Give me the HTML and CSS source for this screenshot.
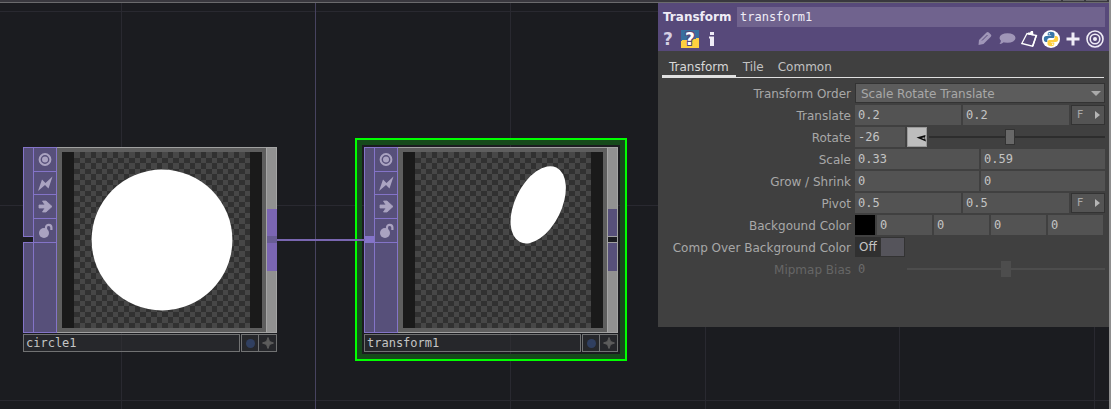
FILE: index.html
```html
<!DOCTYPE html>
<html lang="en">
<head>
<meta charset="utf-8">
<title>Network Editor</title>
<link rel="stylesheet" href="styles.css">
</head>
<body>
<svg class="symbols" aria-hidden="true">
  <defs><pattern id="checker" width="11" height="11" patternUnits="userSpaceOnUse"><rect width="11" height="11" fill="#313131"/><path d="M0 0h6v6H0zM6 6h5v5H6z" fill="#474747" shape-rendering="crispEdges"/></pattern></defs>
  <symbol id="view" viewBox="0 0 22 23"><circle cx="11" cy="11.500" r="5.400" fill="none" stroke="currentColor" stroke-width="2"/><circle cx="11" cy="11.500" r="3" fill="currentColor"/></symbol>
  <symbol id="bolt" viewBox="0 0 22 23"><path d="M4 19 8 7.500l3.500 3.500L18.500 4.500l-4 12L11 13z" fill="currentColor"/></symbol>
  <symbol id="arrow" viewBox="0 0 22 23"><path d="M5 10h6L8.500 6h3.500l6 5.500-6 5.500H8.500l2.500-4H5z" fill="currentColor" stroke="currentColor" stroke-width=".8"/></symbol>
  <symbol id="lock" viewBox="0 0 22 23"><circle cx="10" cy="14" r="5" fill="currentColor"/><path d="M12 10.500V8.500a2.700 2.700 0 0 1 5.400 0v2.500" fill="none" stroke="currentColor" stroke-width="2.200"/></symbol>
  <symbol id="star" viewBox="0 0 16 16"><path d="M8 2.500 9.500 6.500l4 1.500-4 1.500L8 13.500 6.500 9.500l-4-1.500 4-1.500z" fill="#5c5c5c" stroke="#5c5c5c"/></symbol>
</svg>
<main class="editor">
  <div class="topbar"><span></span><span></span><span></span></div>
  <section class="network" aria-label="Network">
    <svg class="gridlines" aria-hidden="true">
      <path d="M121.500 0V2000M510.500 0V2000M705.500 0V2000M899.500 0V2000M1094.500 0V2000M0 8.500H4000M0 202.500H4000M0 397.500H4000" stroke="#292930"/>
      <path d="M315.500 0V2000" stroke="#47435f"/>
    </svg>

    <div class="place place-circle">
      <article class="node">
        <div class="body">
          <div class="input-bar"><i class="port"></i></div>
          <div class="flags">
            <button aria-label="Viewer"><svg><use href="#view"/></svg></button>
            <button aria-label="Bypass"><svg><use href="#bolt"/></svg></button>
            <button aria-label="Display"><svg><use href="#arrow"/></svg></button>
            <button aria-label="Lock"><svg><use href="#lock"/></svg></button>
          </div>
          <div class="view"><div class="screen"><svg viewBox="0 0 176 176"><rect width="176" height="176" fill="url(#checker)"/><circle cx="88" cy="88" r="70.400" fill="#fff"/></svg></div></div>
          <div class="output-bar linked"><i class="port"></i></div>
        </div>
        <div class="caption"><span class="name">circle1</span><button aria-label="Comment"><i class="dot"></i></button><button aria-label="Activate"><svg><use href="#star"/></svg></button></div>
      </article>
    </div>

    <div class="place place-transform">
      <article class="node">
        <div class="body">
          <div class="input-bar linked"><i class="port"></i></div>
          <div class="flags">
            <button aria-label="Viewer"><svg><use href="#view"/></svg></button>
            <button aria-label="Bypass"><svg><use href="#bolt"/></svg></button>
            <button aria-label="Display"><svg><use href="#arrow"/></svg></button>
            <button aria-label="Lock"><svg><use href="#lock"/></svg></button>
          </div>
          <div class="view"><div class="screen"><svg viewBox="0 0 176 176"><rect width="176" height="176" fill="url(#checker)"/><ellipse cx="123.200" cy="52.800" rx="23.200" ry="41.500" transform="rotate(26 123.200 52.800)" fill="#fff"/></svg></div></div>
          <div class="output-bar"><i class="port"></i></div>
        </div>
        <div class="caption"><span class="name">transform1</span><button aria-label="Comment"><i class="dot"></i></button><button aria-label="Activate"><svg><use href="#star"/></svg></button></div>
      </article>
    </div>
    <div class="wire"></div>
  </section>

  <aside class="panel">
    <header class="head">
      <div class="title"><label for="opname">Transform</label><input id="opname" value="transform1"></div>
      <div class="tools">
        <button class="help" aria-label="Help">?</button>
        <button class="help pyhelp" aria-label="Python help">?</button>
        <button aria-label="Info"><svg viewBox="0 0 18 18"><path d="M7 2h4v3H7zM6 6.500h5V16H7V8.500H6z" fill="#efecf6"/></svg></button>
        <span class="spacer"></span>
        <button aria-label="Edit"><svg viewBox="0 0 18 18"><path d="M2.500 15 3 10l7.500-7.500c.8-.8 1.500-.8 2.300 0l2 2c.7.700.7 1.400 0 2.200L7.500 14z" fill="#a096b8"/><path d="m6 10.500 5.500-5.500" stroke="#57497a"/></svg></button>
        <button aria-label="Comment"><svg viewBox="0 0 18 18"><ellipse cx="9.500" cy="8" rx="8" ry="4.800" fill="#a096b8"/><path d="M3 9.500c0 2-.5 3-1.500 4.500 2.500-.3 4-1.300 5-2.500z" fill="#a096b8"/></svg></button>
        <button aria-label="Clipboard"><svg viewBox="0 0 18 18"><path d="M7 3.500 1.800 13.500 12.500 16.200 16.500 5.500z" fill="none" stroke="#fff" stroke-width="1.300"/><path d="M15.500 5 17 5.500 13.500 16.500 12 16M8 2.500h2l1-1.500h2L13.500 5.500 8 4.500z" fill="#fff"/></svg></button>
        <button aria-label="Python"><svg viewBox="0 0 18 18"><circle cx="9" cy="9" r="9" fill="#fff"/><path d="M8.700 1.800c-2.400 0-3 1-3 2.100v1.500h3.500v.6H4.300C2.600 6 1.800 7.300 1.800 9s.8 3 2.200 3h1.300v-1.700c0-1.200 1-2.200 2.200-2.200h3.300c1 0 1.700-.8 1.700-1.700V3.900c0-1.400-1.500-2.100-3.800-2.100z" fill="#3876a8"/><path d="M9.300 16.200c2.400 0 3-1 3-2.100v-1.500H8.800V12h4.900c1.700 0 2.500-1.300 2.500-3s-.8-3-2.200-3h-1.300v1.700c0 1.200-1 2.200-2.200 2.200H7.200c-1 0-1.700.8-1.700 1.700v2.500c0 1.400 1.500 2.100 3.800 2.100z" fill="#ffcf3e"/><circle cx="7.300" cy="3.700" r=".7" fill="#fff"/><circle cx="10.700" cy="14.300" r=".7" fill="#fff"/></svg></button>
        <button aria-label="Add"><svg viewBox="0 0 18 18"><path d="M9 2.500v13M2.500 9h13" stroke="#efecf6" stroke-width="3"/></svg></button>
        <button aria-label="Target"><svg viewBox="0 0 18 18" fill="none" stroke="#efecf6" stroke-width="1.600"><circle cx="9" cy="9" r="8"/><circle cx="9" cy="9" r="4.800"/><circle cx="9" cy="9" r="2" fill="#efecf6" stroke="none"/></svg></button>
      </div>
    </header>
    <nav class="tabs"><button class="active">Transform</button><button>Tile</button><button>Common</button></nav>
    <form class="params">
      <label for="order">Transform Order</label>
      <div class="row select"><select id="order"><option>Scale Rotate Translate</option></select></div>

      <label for="tx">Translate</label>
      <div class="row"><input id="tx" value="0.2"><input aria-label="Translate y" value="0.2"><button type="button" class="unit">F<i></i></button></div>

      <label for="rotate">Rotate</label>
      <div class="row"><input id="rotate" class="short" value="-26"><button type="button" class="dial" aria-label="Rotation dial"><svg viewBox="0 0 18 18"><path d="M8.500 9.500 17.500 7 17 10l1 3.500z" fill="#0b0b0b"/><path d="m13.500 10 3-.8v2z" fill="#bdbdbd"/></svg></button><input type="range" aria-label="Rotate slider" min="0" max="100" value="46"></div>

      <label for="sx">Scale</label>
      <div class="row"><input id="sx" value="0.33"><input aria-label="Scale y" value="0.59"></div>

      <label for="grow">Grow / Shrink</label>
      <div class="row"><input id="grow" value="0"><input aria-label="Grow / Shrink y" value="0"></div>

      <label for="px">Pivot</label>
      <div class="row"><input id="px" value="0.5"><input aria-label="Pivot y" value="0.5"><button type="button" class="unit">F<i></i></button></div>

      <label for="red">Backgound Color</label>
      <div class="row color"><button type="button" class="swatch" aria-label="Pick color"></button><input id="red" value="0"><input aria-label="Green" value="0"><input aria-label="Blue" value="0"><input aria-label="Alpha" value="0"></div>

      <label for="comp">Comp Over Background Color</label>
      <div class="row"><span class="toggle"><span>Off</span><input type="checkbox" id="comp"></span></div>

      <label for="bias" class="off">Mipmap Bias</label>
      <div class="row"><input id="bias" class="short" value="0" disabled><input type="range" aria-label="Mipmap Bias slider" min="0" max="100" value="50" disabled></div>
    </form>
  </aside>
</main>
</body>
</html>
```

FILE: styles.css
```css
* { box-sizing: border-box; }
body { margin: 0; background: #1b1c20; font: 12px/20px "DejaVu Sans", sans-serif; color: #a8a8a8; }
button, input, select { font: inherit; color: inherit; margin: 0; padding: 0; border: 0; border-radius: 0; background: none; }
button { cursor: pointer; }
svg { display: block; }
.symbols { position: absolute; width: 0; height: 0; }

.editor { position: relative; min-height: 100vh; display: flex; flex-direction: column; border-right: 2px solid #8f8f8f; overflow: hidden; }
.topbar { display: flex; justify-content: flex-end; gap: 2px; height: 3px; padding-right: 2px; background: #39383e; border-bottom: 1px solid #6b6b6d; }
.topbar span { width: 21px; height: 1px; background: #66666a; }
.network { position: relative; flex: 1; }
.gridlines { position: absolute; inset: 0; width: 100%; height: 100%; }

/* nodes on the free canvas */
.place { position: absolute; }
.place-circle { left: 23px; top: 144px; }
.place-transform { left: 355px; top: 135px; border: 2px solid #00ff00; }
.place-transform .node { border: 5px solid #164a1b; padding: 2px; }
.node { display: flex; flex-direction: column; gap: 1px; }
.body { display: flex; height: 186px; width: 254px; }
.input-bar { width: 10px; background: #57507a; border: 1px solid #8474c8; border-right: 0; display: flex; }
.flags { width: 24px; background: #57507a; border: 1px solid #8474c8; }
.flags button { display: block; width: 22px; height: 24px; border-bottom: 1px solid #8474c8; color: #aaa3c1; }
.flags button:nth-child(2) { height: 23px; }
.flags svg { width: 22px; height: 23px; }
.view { flex: 1; background: #5e5e5e; border: solid #a0a0a0; border-width: 1px 0; padding: 4px 4px 4px 5px; }
.screen { height: 176px; border: solid #1a1a1a; border-width: 0 12px; }
.output-bar { width: 11px; background: #919191; border: 1px solid #a5a5a5; padding-top: 61px; }
.port { display: block; }
.input-bar .port { flex: 1; margin: 88px 0 0 -1px; height: 7px; border: solid #8474c8; border-width: 1px 0; background: #1b1c20; }
.input-bar.linked .port { background: #8474c8; margin-left: 0; }
.output-bar .port { height: 62px; margin-right: -1px; background: linear-gradient(#57507a 27px, #a0a0a0 27px 28px, #1b1c20 28px 33px, #a0a0a0 33px 34px, #57507a 34px); }
.output-bar:not(.linked) .port { border-right: 1px solid #a0a0a0; }
.output-bar.linked .port { background: linear-gradient(#7b66b3 27px, #685c94 27px 34px, #7b66b3 34px); }
.caption { display: flex; height: 18px; color: #c4c4c4; font-family: "DejaVu Sans Mono", monospace; line-height: 16px; }
.caption .name { flex: 1; margin-right: 1px; padding-left: 2px; border: 1px solid #717273; background: #3031338f; }
.caption button { width: 18px; border: 1px solid #717273; background: #3031338f; display: grid; place-items: center; }
.caption button + button { border-left: 0; }
.caption svg { width: 16px; height: 16px; }
.dot { width: 9px; height: 9px; border-radius: 50%; background: #303f60; }
.wire { position: absolute; left: 277px; top: 236px; width: 88px; height: 2px; background: #7966b0; }

/* parameter panel floating over the network */
.panel { position: absolute; top: 3px; left: 658px; right: 0; padding-bottom: 48px; background: #404040; }
.head { padding: 4px 4px 3px 5px; background: #57497a; }
.title { display: flex; }
.title label { width: 74px; color: #efecf6; font-weight: bold; }
.title input { flex: 1; min-width: 0; height: 20px; padding-left: 3px; background: #70638e; color: #efecf6; font-family: "DejaVu Sans Mono", monospace; }
.tools { display: flex; gap: 4px; padding: 3px 1px 0 0; }
.tools button { width: 18px; height: 18px; }
.tools svg { width: 18px; height: 18px; }
.tools .help { width: 14px; color: #d5cfe3; font: bold 17px/18px "DejaVu Sans", sans-serif; text-align: left; }
.tools .help.pyhelp { width: 18px; color: #fff; text-align: center; background: linear-gradient(172deg, #376f9f 52%, #ffd03f 52%); text-shadow: 1px 1px #57497a, -1px 1px #57497a, 1px -1px #57497a, -1px -1px #57497a; }
.spacer { flex: 1; }
.tabs { display: flex; margin: 5px 5px 0 4px; border-bottom: 1px solid #e0e0e0; }
.tabs button { height: 21px; padding: 0 7px; color: #c2c2c2; }
.tabs .active { color: #d8d8d8; box-shadow: inset 0 -2px #e0e0e0; }

.params { display: grid; grid-template-columns: 193px minmax(0, 1fr); gap: 2px 4px; padding: 5px 4px 0 0; }
.params > label { text-align: right; height: 20px; line-height: 22px; white-space: nowrap; }
.params > .off { color: #666; }
.row { display: flex; gap: 2px; height: 20px; }
.row input:not([type]) { flex: 1; min-width: 0; padding-left: 3px; background: #535353; color: #c4c4c4; font-family: "DejaVu Sans Mono", monospace; }
.row .short:not([type]) { flex: 0 0 50px; }
.row input:disabled:not([type]) { background: none; color: #6b6b6b; }
.row select { flex: 1; min-width: 0; appearance: none; padding-left: 5px; background: #5c5c5c; border: 1px solid #333; }
.select { position: relative; }
.select::after { content: ""; position: absolute; right: 4px; top: 8px; border: 5px solid transparent; border-top-color: #aaa; border-bottom: 0; }
.unit { width: 34px; display: flex; align-items: center; justify-content: space-between; padding: 0 4px 0 5px; border: 1px solid #333; background: #545454; font-size: 11px; }
.unit i { border: 4px solid transparent; border-left: 5px solid #b5b5b5; border-right: 0; }
.dial { width: 20px; background: #bdbdbd; border: 1px solid #999; }
.swatch { width: 20px; background: #000; }
.color { padding-right: 2px; }
.toggle { display: flex; width: 50px; background: #303030; color: #c4c4c4; }
.toggle span { width: 25px; padding-left: 4px; }
.toggle input { appearance: none; width: 25px; height: 20px; background: #55545b; border: 1px solid #333; }
.row input[type="range"] { appearance: none; flex: 1; min-width: 0; height: 20px; background: linear-gradient(#2d2d2d, #2d2d2d) 0 9px / 100% 2px no-repeat; }
.row input[type="range"]::-webkit-slider-thumb { appearance: none; width: 10px; height: 16px; background: #686868; border: 1px solid #333; }
.row input[type="range"]:disabled { background-image: linear-gradient(#4d4d4d, #4d4d4d); }
.row input[type="range"]:disabled::-webkit-slider-thumb { background: #4d4d4d; border-color: #4d4d4d; }
```
